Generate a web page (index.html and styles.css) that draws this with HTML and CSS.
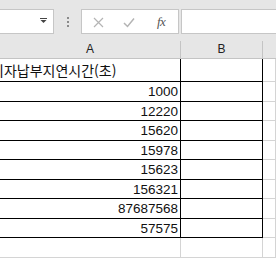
FILE: index.html
```html
<!DOCTYPE html>
<html lang="ko">
<head>
<meta charset="utf-8">
<link rel="stylesheet" href="styles.css">
</head>
<body>
<div class="toolbar">
  <div class="namebox">
    <svg class="dd" width="7" height="5" viewBox="0 0 7 5"><rect x="0" y="0" width="7" height="1" fill="#444"/><path d="M0.5 2 L6.5 2 L3.5 5 Z" fill="#444"/></svg>
  </div>
  <div class="grip"><i></i><i></i><i></i></div>
  <div class="fbtns">
    <svg class="ico" width="11" height="11" viewBox="0 0 11 11"><path d="M1 1 L10 10 M10 1 L1 10" stroke="#b4b4b4" stroke-width="1.2" fill="none"/></svg>
    <svg class="ico" width="12" height="11" viewBox="0 0 12 11"><path d="M1 6 L4.5 9.5 L11 1.5" stroke="#b4b4b4" stroke-width="1.5" fill="none"/></svg>
    <span class="fx">fx</span>
  </div>
  <div class="finput"></div>
</div>
<div class="sheet">
  <div class="h">A</div><div class="h">B</div><div class="h hc"></div>
  <div class="t">이자납부지연시간(초)</div><div class="e"></div><div class="g"></div>
  <div class="n">1000</div><div class="e"></div><div class="g"></div>
  <div class="n">12220</div><div class="e"></div><div class="g"></div>
  <div class="n">15620</div><div class="e"></div><div class="g"></div>
  <div class="n">15978</div><div class="e"></div><div class="g"></div>
  <div class="n">15623</div><div class="e"></div><div class="g"></div>
  <div class="n">156321</div><div class="e"></div><div class="g"></div>
  <div class="n">87687568</div><div class="e"></div><div class="g"></div>
  <div class="n">57575</div><div class="e"></div><div class="g"></div>
  <div class="g"></div><div class="g"></div><div class="g"></div>
</div>
</body>
</html>
```
FILE: styles.css
```css
html, body {
  margin: 0;
  padding: 0;
  background: #ffffff;
}
body {
  width: 276px;
  height: 260px;
  overflow: hidden;
  font-family: "Liberation Sans", Arial, sans-serif;
}
.toolbar {
  height: 41px;
  background: #e6e6e6;
  display: flex;
  align-items: flex-start;
  padding-top: 9px;
  box-sizing: border-box;
}
.namebox {
  width: 54px;
  height: 25px;
  box-sizing: border-box;
  background: #ffffff;
  border: 1px solid #c6c6c6;
  border-left: none;
  display: flex;
  align-items: center;
  justify-content: flex-end;
  padding-right: 6px;
  flex-shrink: 0;
}
.dd {
  display: block;
  margin-top: -2px;
}
.grip {
  width: 27px;
  height: 25px;
  display: flex;
  flex-direction: column;
  align-items: center;
  justify-content: center;
  gap: 2px;
  flex-shrink: 0;
}
.grip i {
  display: block;
  width: 2px;
  height: 2px;
  background: #8a8a8a;
}
.fbtns {
  width: 98px;
  height: 25px;
  box-sizing: border-box;
  background: #ffffff;
  border: 1px solid #c6c6c6;
  display: flex;
  align-items: center;
  padding-left: 11px;
  padding-top: 1px;
  flex-shrink: 0;
}
.ico {
  display: block;
}
.ico + .ico {
  margin-left: 19px;
}
.fx {
  margin-left: 22px;
  font-family: "Liberation Serif", "Times New Roman", serif;
  font-style: italic;
  font-size: 13px;
  color: #555555;
  letter-spacing: -0.5px;
}
.finput {
  margin-left: 2px;
  flex: 1;
  height: 25px;
  box-sizing: border-box;
  background: #ffffff;
  border-top: 1px solid #c6c6c6;
  border-bottom: 1px solid #c6c6c6;
  border-left: 1px solid #c6c6c6;
}
.sheet {
  display: grid;
  grid-template-columns: 181px 82px 1fr;
  grid-template-rows: 18px 23px 20px 19px 20px 19px 20px 19px 20px 19px 20px;
}
.sheet > div {
  box-sizing: border-box;
  overflow: hidden;
  white-space: nowrap;
}
.h {
  background: #e6e6e6;
  border-right: 1px solid #c4c4c4;
  border-bottom: 1px solid #c4c4c4;
  text-align: center;
  font-size: 12px;
  line-height: 17px;
  color: #222222;
}
.hc {
  border-right: none;
}
.t {
  border-right: 1px solid #000;
  border-bottom: 1px solid #000;
  font-family: "Noto Sans CJK KR", "Liberation Sans", sans-serif;
  font-size: 14px;
  line-height: 22px;
  color: #111;
  text-indent: -9px;
}
.n {
  border-right: 1px solid #000;
  border-bottom: 1px solid #000;
  text-align: right;
  padding-right: 2px;
  font-size: 13.5px;
  line-height: 20px;
  color: #111;
}
.e {
  border-right: 1px solid #000;
  border-bottom: 1px solid #000;
}
.g {
  border-right: 1px solid #d4d4d4;
  border-bottom: 1px solid #d4d4d4;
}
```
